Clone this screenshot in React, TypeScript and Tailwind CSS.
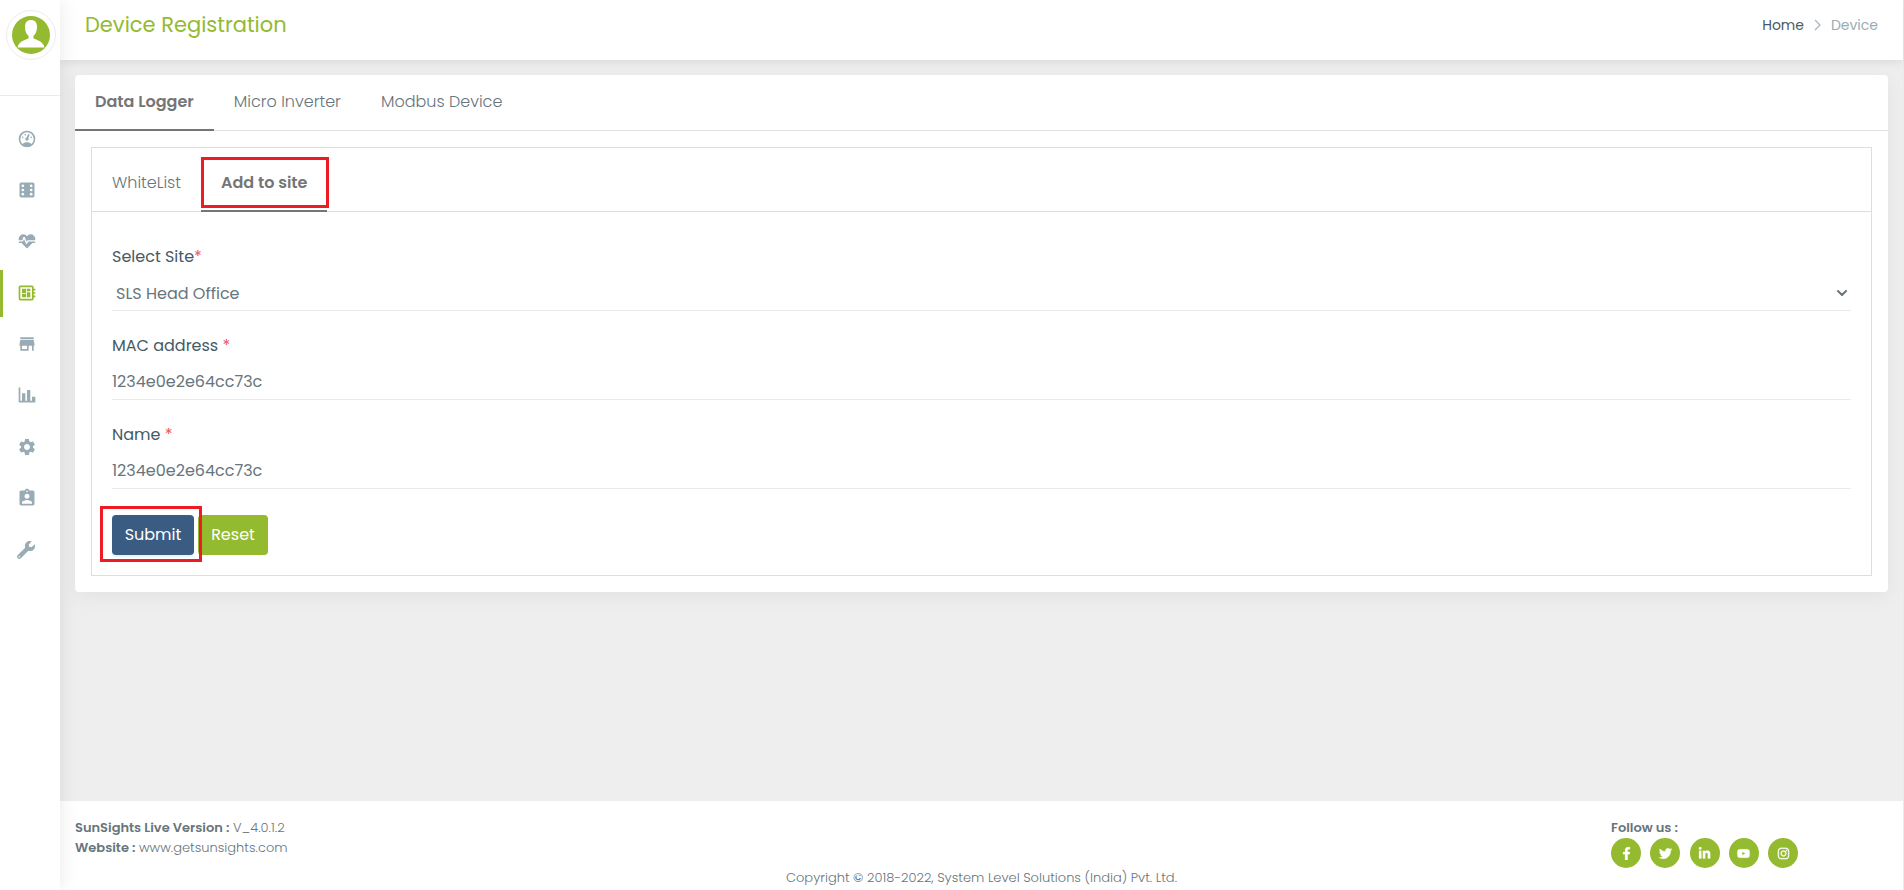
import React from 'react';
import { FaFacebookF, FaTwitter, FaLinkedinIn, FaYoutube, FaInstagram, FaWrench } from 'react-icons/fa';
import { MdAssignmentInd, MdDeveloperBoard, MdSettings, MdStore } from 'react-icons/md';
import { ChevronDown } from 'lucide-react';
import clsx from 'clsx';

const GaugeIcon: React.FC<{ className?: string }> = ({ className }) => (
  <svg viewBox="0 0 24 24" fill="currentColor" className={className}>
    <path d="M17.3,18C19,16.5 20,14.4 20,12A8,8 0 0,0 12,4A8,8 0 0,0 4,12C4,14.4 5,16.5 6.7,18C8.2,16.7 10,16 12,16C14,16 15.9,16.7 17.3,18M12,2A10,10 0 0,1 22,12A10,10 0 0,1 12,22A10,10 0 0,1 2,12A10,10 0 0,1 12,2M7,9A1,1 0 0,1 8,10A1,1 0 0,1 7,11A1,1 0 0,1 6,10A1,1 0 0,1 7,9M10,6A1,1 0 0,1 11,7A1,1 0 0,1 10,8A1,1 0 0,1 9,7A1,1 0 0,1 10,6M17,9A1,1 0 0,1 18,10A1,1 0 0,1 17,11A1,1 0 0,1 16,10A1,1 0 0,1 17,9M14.4,6.1C14.9,6.3 15.1,6.9 15,7.4L13.6,10.8C13.8,11.1 14,11.5 14,12A2,2 0 0,1 12,14A2,2 0 0,1 10,12C10,11 10.7,10.1 11.7,10L13.1,6.7C13.3,6.1 13.9,5.9 14.4,6.1Z" />
  </svg>
);

const DominoIcon: React.FC<{ className?: string }> = ({ className }) => (
  <svg viewBox="0 0 24 24" className={className}>
    <rect x="3" y="3" width="18" height="18" rx="2" fill="currentColor" />
    {[7, 17].map((cx) =>
      [7, 12, 17].map((cy) => <circle key={`${cx}-${cy}`} cx={cx} cy={cy} r="1.6" fill="white" />)
    )}
  </svg>
);

const HeartPulseIcon: React.FC<{ className?: string }> = ({ className }) => (
  <svg viewBox="0 0 24 24" fill="currentColor" className={className}>
    <path d="M7.5,4A5.5,5.5 0 0,0 2,9.5C2,10 2.09,10.5 2.22,11H6.3L7.57,7.63C7.87,6.83 9.05,6.75 9.43,7.63L11.5,13L12.09,11.58C12.22,11.25 12.57,11 13,11H21.78C21.91,10.5 22,10 22,9.5A5.5,5.5 0 0,0 16.5,4C14.64,4 13,4.93 12,6.34C11,4.93 9.36,4 7.5,4V4M3,12.5A1,1 0 0,0 2,13.5A1,1 0 0,0 3,14.5H5.44L11,20C12,20.9 12,20.9 13,20L18.56,14.5H21A1,1 0 0,0 22,13.5A1,1 0 0,0 21,12.5H13.4L12.47,14.8C12.07,15.81 10.92,15.67 10.55,14.83L8.5,9.5L7.54,11.83C7.39,12.21 7.05,12.5 6.6,12.5H3Z" />
  </svg>
);

const ChartIcon: React.FC<{ className?: string }> = ({ className }) => (
  <svg viewBox="0 0 24 24" fill="currentColor" className={className}>
    <path d="M22,21H2V3H4V19H6V10H10V19H12V6H16V19H18V14H22V21Z" />
  </svg>
);

const NAV_ITEMS = [
  { label: 'Dashboard', icon: GaugeIcon },
  { label: 'Sites', icon: DominoIcon },
  { label: 'Health', icon: HeartPulseIcon },
  { label: 'Devices', icon: MdDeveloperBoard, active: true },
  { label: 'Store', icon: MdStore },
  { label: 'Reports', icon: ChartIcon },
  { label: 'Settings', icon: MdSettings },
  { label: 'Users', icon: MdAssignmentInd },
  { label: 'Tools', icon: FaWrench, small: true },
];

const SOCIAL_LINKS = [
  { label: 'Facebook', icon: FaFacebookF },
  { label: 'Twitter', icon: FaTwitter },
  { label: 'LinkedIn', icon: FaLinkedinIn },
  { label: 'YouTube', icon: FaYoutube },
  { label: 'Instagram', icon: FaInstagram },
];

const Sidebar: React.FC = () => (
  <aside className="relative z-10 w-[60px] shrink-0 bg-white shadow-[0_0_20px_rgba(0,0,0,0.09)]">
    <div className="h-24 border-b border-[#ebebeb] pl-[6px] pt-[10px]">
      <button
        type="button"
        aria-label="Profile"
        className="flex h-[50px] w-[50px] items-center justify-center rounded-full border border-[#ececec]"
      >
        <svg viewBox="0 0 38 38" className="h-[38px] w-[38px]">
          <circle cx="19" cy="19" r="19" fill="#94ba2f" />
          <path
            fill="white"
            d="M19 4c-4 0-6 2.600-6 7 0 4.200 1.500 7.600 3.600 9v2.300c-1.500 1.500-9.600 2.200-11.100 9.200h27c-1.500-7-9.600-7.700-11.100-9.200V20c2.100-1.400 3.600-4.800 3.600-9 0-4.400-2-7-6-7z"
          />
        </svg>
      </button>
    </div>
    <nav className="mt-5 flex h-[458px] flex-col justify-between">
      {NAV_ITEMS.map(({ label, icon: Icon, active, small }) => (
        <a
          key={label}
          href="#"
          aria-label={label}
          className={clsx(
            'flex h-[47px] items-center border-l-[3px] pb-[2px] pl-[14px]',
            active ? 'border-[#94ba2f] text-[#94ba2f]' : 'border-transparent text-[#99abb4]'
          )}
        >
          <Icon className={small ? 'h-[18px] w-[18px]' : 'h-5 w-5'} />
        </a>
      ))}
    </nav>
  </aside>
);

interface TabProps {
  label: string;
  active?: boolean;
  className?: string;
}

const Tab: React.FC<TabProps> = ({ label, active, className }) => (
  <button
    type="button"
    role="tab"
    aria-selected={!!active}
    className={clsx(
      '-mb-px border-b-2 px-5 text-base',
      active ? 'border-[#757575] font-semibold text-[#757575]' : 'border-transparent font-light text-[#67757c]',
      className
    )}
  >
    {label}
  </button>
);

const fieldClass = 'h-9 w-full border-b border-[#e9ecef] bg-white text-base text-[#67757c] outline-none';

interface FieldProps {
  id: string;
  label: string;
  children: React.ReactNode;
}

const Field: React.FC<FieldProps> = ({ id, label, children }) => (
  <div className="mb-[23px]">
    <label htmlFor={id} className="mb-[6px] block text-base leading-6 text-[#455a64]">
      {label}
      <span className="text-[#ef5350]">*</span>
    </label>
    {children}
  </div>
);

const Footer: React.FC = () => (
  <footer className="h-[89px] bg-white px-[15px] pt-[17px] text-[13px] leading-5 text-[#67757c]">
    <div className="flex justify-between">
      <div className="font-light">
        <p>
          <b className="font-semibold">SunSights Live Version :</b> V_4.0.1.2
        </p>
        <p>
          <b className="font-semibold">Website :</b> <a href="#">www.getsunsights.com</a>
        </p>
      </div>
      <div className="w-[277px]">
        <p className="font-semibold">Follow us :</p>
        <div className="flex w-[187px] justify-between">
          {SOCIAL_LINKS.map(({ label, icon: Icon }) => (
            <a
              key={label}
              href="#"
              aria-label={label}
              className="flex h-[30px] w-[30px] items-center justify-center rounded-full bg-[#94ba2f] text-white"
            >
              <Icon className="h-[13px] w-[13px]" stroke="currentColor" strokeWidth={10} />
            </a>
          ))}
        </div>
      </div>
    </div>
    <p className="text-center font-light">
      Copyright <span className="font-normal">©</span> 2018-2022, System Level Solutions (India) Pvt. Ltd.
    </p>
  </footer>
);

export default function App() {
  return (
    <div className="flex min-h-screen bg-[#eeeeee] font-[Poppins,Inter,sans-serif]">
      <Sidebar />
      <div className="flex min-w-0 flex-1 flex-col border-r border-[#ebebeb]">
        <header className="flex h-[60px] justify-between bg-white px-[25px] pt-[10px] shadow-[0_1px_10px_rgba(0,0,0,0.1)]">
          <h1 className="text-[21px] leading-[30px] text-[#94ba2f]">Device Registration</h1>
          <nav className="flex h-[30px] items-center gap-[10px] text-sm">
            <a href="#" className="text-[#455a64]">Home</a>
            <svg viewBox="0 0 7 12" className="h-3 w-[7px]" fill="none" stroke="#a6b7bf" strokeWidth="1.2">
              <path d="M1 1l5 5-5 5" />
            </svg>
            <span className="text-[#99abb4]">Device</span>
          </nav>
        </header>

        <main className="flex-1 p-[15px]">
          <section className="rounded bg-white pb-4 shadow-[0_5px_20px_rgba(0,0,0,0.05)]">
            <div role="tablist" className="flex h-14 border-b border-[#dee2e6]">
              <Tab label="Data Logger" active />
              <Tab label="Micro Inverter" />
              <Tab label="Modbus Device" />
            </div>

            <div className="mx-4 mt-4 border border-[#dcdfe1]">
              <div role="tablist" className="flex h-16 border-b border-[#dcdfe1]">
                <Tab label="WhiteList" className="pt-2" />
                <div className="relative flex">
                  <Tab label="Add to site" active className="pt-2" />
                  <div className="pointer-events-none absolute -right-[2px] left-0 top-[9px] h-[51px] border-[3px] border-[#ed1c24]" />
                </div>
              </div>

              <form className="px-5 pb-5 pt-[33px]">
                <Field id="site" label="Select Site">
                  <div className="relative">
                    <select id="site" className={clsx(fieldClass, 'appearance-none pl-1 pt-[3px]')}>
                      <option>SLS Head Office</option>
                    </select>
                    <ChevronDown
                      className="pointer-events-none absolute right-px top-[10px] h-4 w-4 text-[#67757c]"
                      strokeWidth={3}
                    />
                  </div>
                </Field>
                <Field id="mac" label="MAC address ">
                  <input id="mac" type="text" defaultValue="1234e0e2e64cc73c" className={fieldClass} />
                </Field>
                <Field id="name" label="Name ">
                  <input id="name" type="text" defaultValue="1234e0e2e64cc73c" className={fieldClass} />
                </Field>

                <div className="mt-[26px] flex gap-1 text-base text-white">
                  <div className="relative">
                    <button type="submit" className="h-10 w-[82px] rounded bg-[#3a5c82] shadow-[0_2px_2px_rgba(66,165,245,0.14)]">
                      Submit
                    </button>
                    <div className="pointer-events-none absolute -bottom-[7px] -left-3 -right-2 -top-[9px] z-10 border-[3px] border-[#ed1c24]" />
                  </div>
                  <button type="reset" className="h-10 w-[70px] rounded bg-[#94ba2f]">
                    Reset
                  </button>
                </div>
              </form>
            </div>
          </section>
        </main>

        <Footer />
      </div>
    </div>
  );
}
